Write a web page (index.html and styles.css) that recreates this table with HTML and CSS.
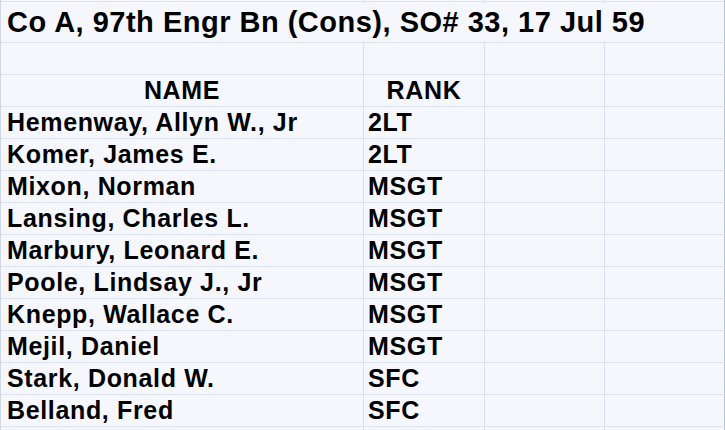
FILE: index.html
```html
<!DOCTYPE html>
<html>
<head>
<meta charset="utf-8">
<link rel="stylesheet" href="styles.css">
</head>
<body>
<div class="sheet">
  <div class="row strip"><div class="c a"></div><div class="c b"></div><div class="c cc"></div><div class="c d"></div></div>
  <div class="row title"><div class="c merged">Co A, 97th Engr Bn (Cons), SO# 33, 17 Jul 59</div></div>
  <div class="row empty"><div class="c a"></div><div class="c b"></div><div class="c cc"></div><div class="c d"></div></div>
  <div class="row"><div class="c a center">NAME</div><div class="c b center">RANK</div><div class="c cc"></div><div class="c d"></div></div>
  <div class="row"><div class="c a">Hemenway, Allyn W., Jr</div><div class="c b">2LT</div><div class="c cc"></div><div class="c d"></div></div>
  <div class="row"><div class="c a">Komer, James E.</div><div class="c b">2LT</div><div class="c cc"></div><div class="c d"></div></div>
  <div class="row"><div class="c a">Mixon, Norman</div><div class="c b">MSGT</div><div class="c cc"></div><div class="c d"></div></div>
  <div class="row"><div class="c a">Lansing, Charles L.</div><div class="c b">MSGT</div><div class="c cc"></div><div class="c d"></div></div>
  <div class="row"><div class="c a">Marbury, Leonard E.</div><div class="c b">MSGT</div><div class="c cc"></div><div class="c d"></div></div>
  <div class="row"><div class="c a">Poole, Lindsay J., Jr</div><div class="c b">MSGT</div><div class="c cc"></div><div class="c d"></div></div>
  <div class="row"><div class="c a">Knepp, Wallace C.</div><div class="c b">MSGT</div><div class="c cc"></div><div class="c d"></div></div>
  <div class="row"><div class="c a">Mejil, Daniel</div><div class="c b">MSGT</div><div class="c cc"></div><div class="c d"></div></div>
  <div class="row"><div class="c a">Stark, Donald W.</div><div class="c b">SFC</div><div class="c cc"></div><div class="c d"></div></div>
  <div class="row"><div class="c a">Belland, Fred</div><div class="c b">SFC</div><div class="c cc"></div><div class="c d"></div></div>
  <div class="row last"><div class="c a"></div><div class="c b"></div><div class="c cc"></div><div class="c d"></div></div>
</div>
</body>
</html>
```
FILE: styles.css
```css
html, body {
  margin: 0;
  padding: 0;
  background: #f5f7fd;
  overflow: hidden;
}
body {
  width: 725px;
  height: 430px;
}
.sheet {
  width: 725px;
  height: 430px;
  overflow: hidden;
  font-family: "Liberation Sans", Arial, sans-serif;
  font-weight: bold;
  color: #000;
  border-left: 1px solid #d0d8e4;
  box-sizing: border-box;
}
.row {
  display: flex;
  height: 32px;
  border-bottom: 1px solid #dce3ee;
  box-sizing: border-box;
}
.row.strip {
  height: 2px;
}
.row.title {
  height: 41px;
}
.row.empty {
  height: 32px;
}
.row.last {
  height: 6px;
  border-bottom: none;
}
.c {
  box-sizing: border-box;
  border-right: 1px solid #dae0ea;
  display: flex;
  align-items: flex-end;
  font-size: 25px;
  line-height: 25px;
  letter-spacing: 0.65px;
  padding: 0 0 3px 6px;
  white-space: nowrap;
}
.a { width: 363px; }
.b { width: 121px; padding-left: 4px; }
.cc { width: 120px; }
.d { width: 120px; border-right-color: #b4c6d8; }
.merged {
  width: 724px;
  font-size: 29px;
  line-height: 29px;
  letter-spacing: 0.5px;
  padding-bottom: 5px;
  border-right-color: #b4c6d8;
}
.center {
  justify-content: center;
  padding-left: 0;
}
```
